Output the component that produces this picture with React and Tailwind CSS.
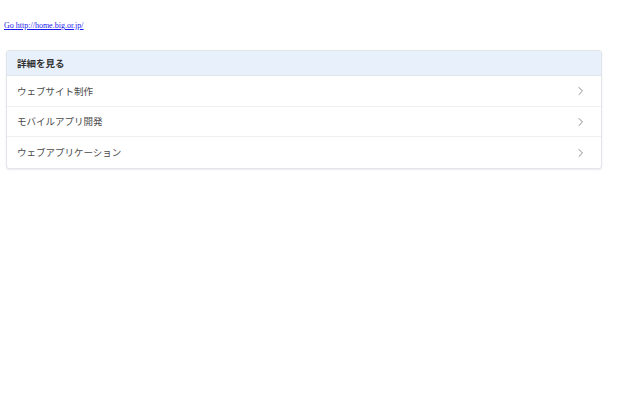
import React from "react";

const items = [
  { t: "ウェブサイト制作", h: "h-[31px] border-b border-[#f0f0f0]" },
  { t: "モバイルアプリ開発", h: "h-[30px] border-b border-[#f0f0f0]" },
  { t: "ウェブアプリケーション", h: "h-[31px]" },
];

function Chevron() {
  return (
    <svg width="8" height="10" viewBox="0 0 8 10" fill="none" className="shrink-0">
      <path d="M2 1.5 L5.5 5 L2 8.5" stroke="#8a8a8a" strokeWidth="1" strokeLinecap="round" strokeLinejoin="round" />
    </svg>
  );
}

export default function App() {
  return (
    <div className="w-[640px] h-[400px] bg-white">
      <div className="pt-[21px] pl-[4px] h-[50px] text-[8px] leading-[10px]" style={{ fontFamily: '"Liberation Serif", serif' }}>
        <a href="#" className="text-[#1a1aee] underline">
          Go http://home.big.or.jp/
        </a>
      </div>
      <div
        className="ml-[6px] w-[596px] border border-[#e2e5ea] rounded-[3px] bg-white shadow-[0_1px_2px_rgba(0,0,0,0.08)] overflow-hidden"
        style={{ fontFamily: '"Noto Sans CJK JP", "Noto Sans", sans-serif' }}
      >
        <div className="h-[25px] bg-[#e8f0fc] border-b border-[#dfe4ec] flex items-center px-[10px] text-[9.5px] font-bold text-[#333]">
          詳細を見る
        </div>
        {items.map((it) => (
          <div
            key={it.t}
            className={`flex items-center justify-between pl-[10px] pr-[16px] text-[9.5px] text-[#4a4a4a] ${it.h}`}
          >
            <span>{it.t}</span>
            <Chevron />
          </div>
        ))}
      </div>
    </div>
  );
}
